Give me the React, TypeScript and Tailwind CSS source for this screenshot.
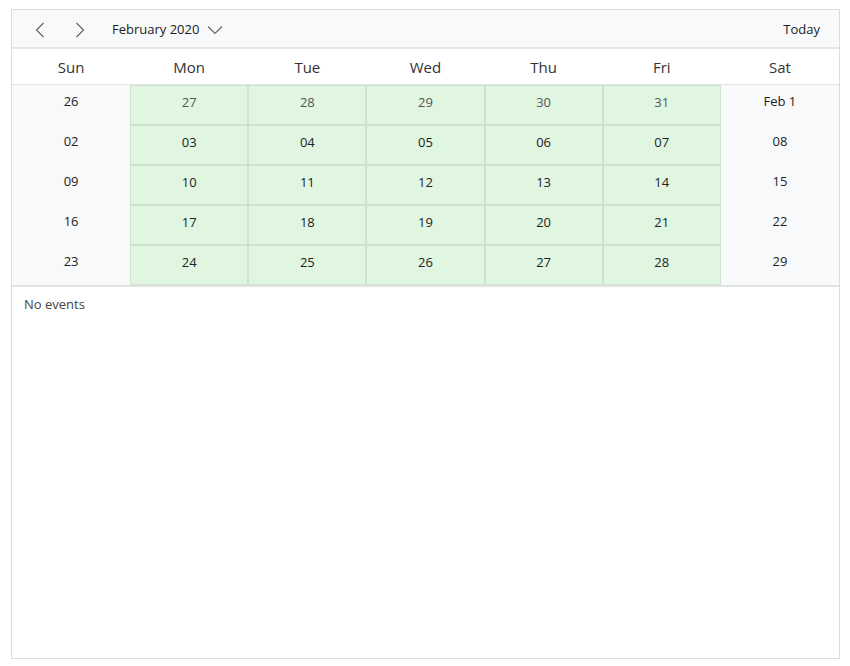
import React from 'react';

const days = ['Sun', 'Mon', 'Tue', 'Wed', 'Thu', 'Fri', 'Sat'];

const weeks: string[][] = [
  ['26', '27', '28', '29', '30', '31', 'Feb 1'],
  ['02', '03', '04', '05', '06', '07', '08'],
  ['09', '10', '11', '12', '13', '14', '15'],
  ['16', '17', '18', '19', '20', '21', '22'],
  ['23', '24', '25', '26', '27', '28', '29'],
];

function Chevron({ dir }: { dir: 'left' | 'right' }) {
  return (
    <svg width="10" height="16" viewBox="0 0 10 16" fill="none" stroke="#666" strokeWidth="1.2">
      {dir === 'left' ? <path d="M8.5 1 L1.5 8 L8.5 15" /> : <path d="M1.5 1 L8.5 8 L1.5 15" />}
    </svg>
  );
}

export default function App() {
  return (
    <div className="pt-[9px] pl-[11px]" style={{ fontFamily: '"Open Sans", "Noto Sans", sans-serif' }}>
      <div className="w-[829px] h-[650px] border border-[#dcdcdc] flex flex-col text-[#333]">
        {/* toolbar */}
        <div className="h-[39px] bg-[#f8f9fa] border-b-2 border-[#e6e6e6] flex items-center pt-[2px] shrink-0">
          <button className="w-[40px] h-full flex items-center justify-center ml-[8px]">
            <Chevron dir="left" />
          </button>
          <button className="w-[40px] h-full flex items-center justify-center">
            <Chevron dir="right" />
          </button>
          <div className="flex items-center ml-[12px] text-[13px] text-[#222]">
            <span>February 2020</span>
            <svg className="ml-[8px]" width="16" height="10" viewBox="0 0 16 10" fill="none" stroke="#666" strokeWidth="1.2">
              <path d="M1 1.5 L8 8.5 L15 1.5" />
            </svg>
          </div>
          <div className="ml-auto mr-[19px] text-[13px] text-[#222]">Today</div>
        </div>

        {/* weekday header */}
        <div className="grid grid-cols-7 h-[36px] border-b border-[#e3e3e3] shrink-0">
          {days.map((d) => (
            <div key={d} className="flex items-center justify-center pt-[2px] text-[15px] text-[#333]">
              {d}
            </div>
          ))}
        </div>

        {/* month grid */}
        <div className="border-b-2 border-[#e2e2e2] shrink-0">
          {weeks.map((w, wi) => (
            <div key={wi} className="grid grid-cols-7 h-[40px]">
              {w.map((n, di) => {
                const weekend = di === 0 || di === 6;
                const muted = wi === 0 && !weekend;
                return (
                  <div
                    key={di}
                    className={
                      weekend
                        ? 'bg-[#f8f9fa] flex justify-center pt-[7px] text-[13px] text-[#222]'
                        : 'bg-[#e1f6e1] border border-[#cde3cd] flex justify-center pt-[7px] text-[13px] ' +
                          (muted ? 'text-[#555]' : 'text-[#222]')
                    }
                  >
                    {n}
                  </div>
                );
              })}
            </div>
          ))}
        </div>

        <div className="flex-1 px-[12px] pt-[8px] text-[13px] text-[#444]">No events</div>
      </div>
    </div>
  );
}
